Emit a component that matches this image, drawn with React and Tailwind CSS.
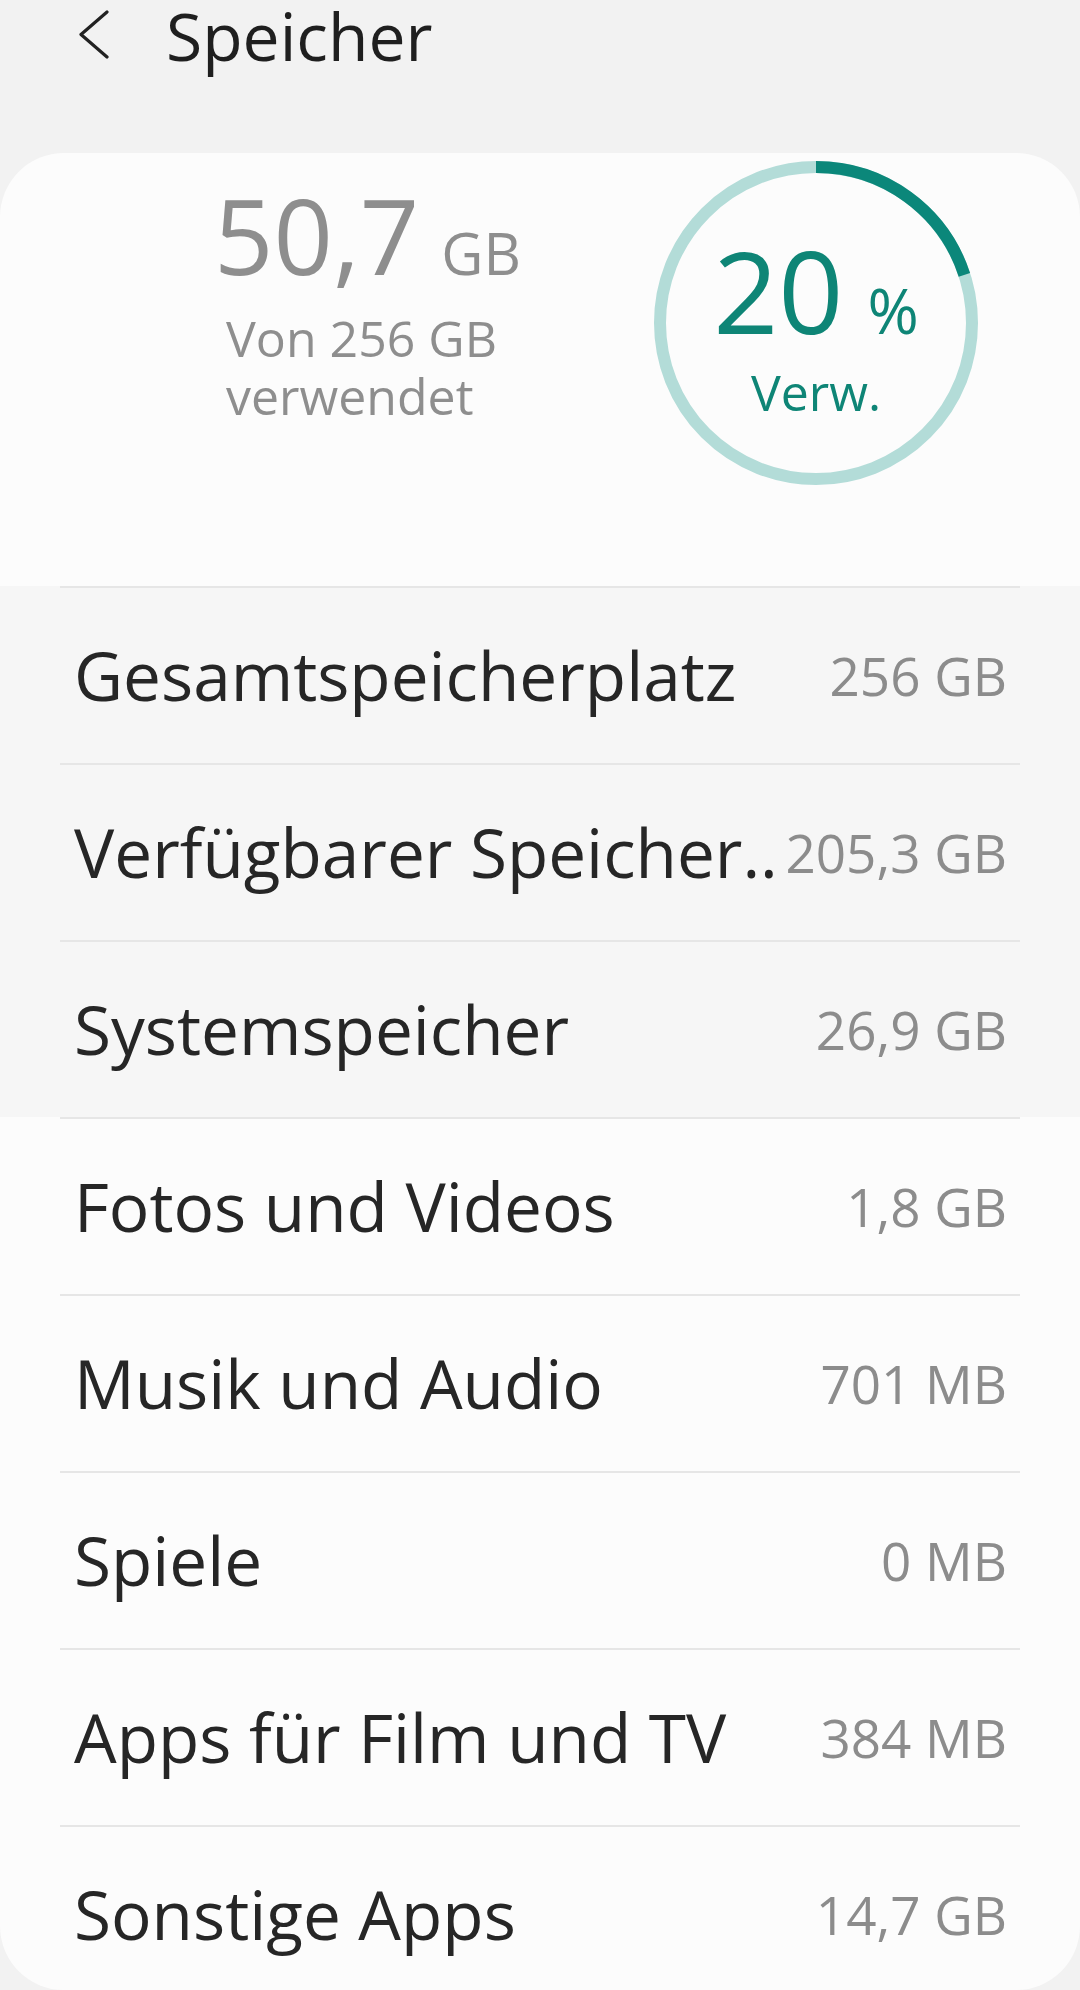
import React from 'react'

const rows = [
    { label: 'Gesamtspeicherplatz', value: '256 GB', shade: true },
    { label: 'Verfügbarer Speicher..', value: '205,3 GB', shade: true },
    { label: 'Systemspeicher', value: '26,9 GB', shade: true },
    { label: 'Fotos und Videos', value: '1,8 GB' },
    { label: 'Musik und Audio', value: '701 MB' },
    { label: 'Spiele', value: '0 MB' },
    { label: 'Apps für Film und TV', value: '384 MB' },
    { label: 'Sonstige Apps', value: '14,7 GB', last: true },
]

function Row({ label, value, shade, last }) {
    return (
        <div className={shade ? 'bg-[#f6f6f6]' : ''}>
            <div
                className={
                    'mx-[60px] flex items-center justify-between gap-[6px] border-t-2 border-[#e6e6e6] pl-[14px] pr-[13px] ' +
                    (last ? 'h-[165px] pt-[12px]' : 'h-[177px]')
                }
            >
                <span className="whitespace-nowrap text-[67.5px] leading-none text-[#262626]">{label}</span>
                <span className="whitespace-nowrap text-[53px] leading-none text-[#8c8c8c]">{value}</span>
            </div>
        </div>
    )
}

function UsageRing() {
    const r = 156
    const c = 2 * Math.PI * r
    return (
        <div className="relative mt-[8px] size-[324px] shrink-0">
            <svg className="absolute inset-0" width="324" height="324" viewBox="0 0 324 324">
                <circle cx="162" cy="162" r={r} fill="none" stroke="#b3dcd8" strokeWidth="12" />
                <circle
                    cx="162"
                    cy="162"
                    r={r}
                    fill="none"
                    stroke="#0b877a"
                    strokeWidth="12"
                    strokeDasharray={`${c * 0.2} ${c}`}
                    transform="rotate(-90 162 162)"
                />
            </svg>
            <div className="relative flex flex-col items-center pt-[72px] text-[#0e8576]">
                <div className="flex items-baseline gap-[24px]">
                    <span className="text-[114px] leading-none">20</span>
                    <span className="text-[62px] leading-none">%</span>
                </div>
                <span className="mt-[20px] text-[50px] leading-none">Verw.</span>
            </div>
        </div>
    )
}

export default function App() {
    return (
        <div className="min-h-[1990px] w-[1080px] bg-[#f2f2f2] font-['Open_Sans',sans-serif]">
            <header className="flex h-[153px] items-start">
                <svg className="ml-[78px] mt-[10px]" width="32" height="50" viewBox="0 0 32 50">
                    <path d="M29 2 L3 24.5 L29 47" fill="none" stroke="#222" strokeWidth="3.2" strokeLinecap="round" strokeLinejoin="round" />
                </svg>
                <h1 className="ml-[56px] text-[66px] leading-[70px] text-[#1f1f1f]">Speicher</h1>
            </header>

            <main className="overflow-hidden rounded-[64px] bg-[#fcfcfc]">
                <section className="flex h-[433px]">
                    <div className="w-[654px] shrink-0 pl-[214px] pt-[30px] text-[#8e8e8e]">
                        <div className="flex items-baseline gap-[22px]">
                            <span className="text-[104px] leading-none">50,7</span>
                            <span className="text-[58px] leading-none">GB</span>
                        </div>
                        <p className="ml-[12px] mt-[22px] text-[50px] leading-[58px]">
                            Von 256 GB
                            <br />
                            verwendet
                        </p>
                    </div>
                    <UsageRing />
                </section>

                {rows.map((row) => (
                    <Row key={row.label} {...row} />
                ))}
            </main>
        </div>
    )
}
